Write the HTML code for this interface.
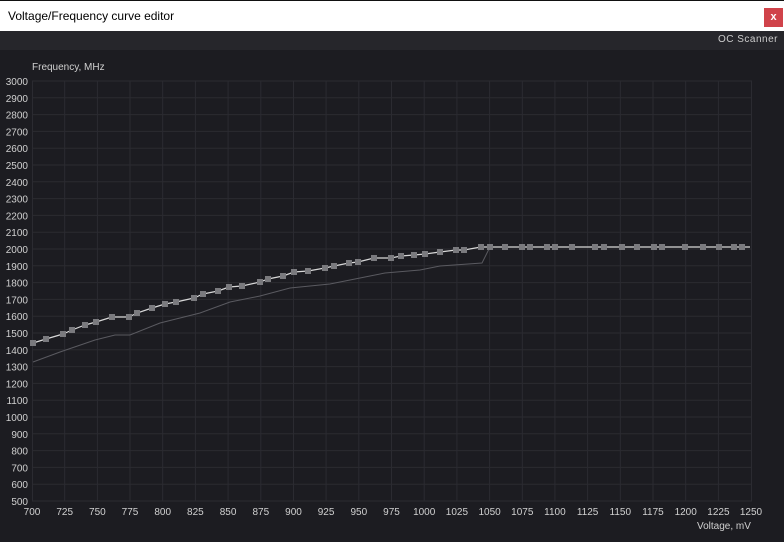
<!DOCTYPE html>
<html><head><meta charset="utf-8"><style>
html,body{margin:0;padding:0;width:784px;height:542px;overflow:hidden;background:#1c1c21;font-family:"Liberation Sans","DejaVu Sans",sans-serif}
.tb{position:absolute;left:0;top:0;width:784px;height:31px;background:#fff;border-top:1px solid #111;box-sizing:border-box}
.tb span{position:absolute;left:8px;top:8px;font-size:12px;color:#000}
.x{position:absolute;left:764px;top:7px;width:19px;height:19px;background:#d0434a;color:#fff;font-size:11px;text-align:center;line-height:18px;font-weight:bold}
.bar{position:absolute;left:0;top:31px;width:784px;height:19px;background:#26262b}
.bar span{position:absolute;right:6px;top:3px;font-size:10px;color:#ccc;letter-spacing:.5px}
svg{position:absolute;left:0;top:0}
</style></head><body>
<div class="tb"><span>Voltage/Frequency curve editor</span><div class="x">x</div></div>
<div class="bar"><span>OC Scanner</span></div>
<svg width="784" height="542" style="top:0">
<g stroke="#2b2b31" stroke-width="1" fill="none">
<path d="M32 81H752M32 97.8H752M32 114.6H752M32 131.4H752M32 148.2H752M32 165H752M32 181.8H752M32 198.6H752M32 215.4H752M32 232.2H752M32 249H752M32 265.8H752M32 282.6H752M32 299.4H752M32 316.2H752M32 333H752M32 349.8H752M32 366.6H752M32 383.4H752M32 400.2H752M32 417H752M32 433.8H752M32 450.6H752M32 467.4H752M32 484.2H752M32 501H752"/>
<path d="M32.5 81V501M64.7 81V501M97.4 81V501M130 81V501M162.7 81V501M195.4 81V501M228.1 81V501M260.8 81V501M293.5 81V501M326.1 81V501M358.8 81V501M391.5 81V501M424.2 81V501M456.9 81V501M489.6 81V501M522.3 81V501M554.9 81V501M587.6 81V501M620.3 81V501M653 81V501M685.7 81V501M718.4 81V501M751.5 81V501"/>
</g>
<polyline fill="none" stroke="#5a5a60" stroke-width="1" points="33,362 60,352 95,340 115,335 130,335 160,323 200,313 230,302 260,296 290,288 300,287 330,284 370,276 385,273 420,270 440,266 482,263 490,247"/>
<polyline fill="none" stroke="#d8d8d8" stroke-width="1.2" points="33,343 46,339 63,334 72,330 85,325 96,322 112,317 129,317 137,313 152,308 165,304 176,302 194,298 203,294 218,291 229,287 242,286 260,282 268,279 283,276 294,272 308,271 325,268 334,266 349,263 358,262 374,258 391,258 401,256 414,255 425,254 440,252 456,250 464,250 481,247 490,247 750,247"/>
<g fill="#7a7a7e">
<rect x="30" y="340" width="6" height="6"/><rect x="43" y="336" width="6" height="6"/><rect x="60" y="331" width="6" height="6"/><rect x="69" y="327" width="6" height="6"/><rect x="82" y="322" width="6" height="6"/><rect x="93" y="319" width="6" height="6"/><rect x="109" y="314" width="6" height="6"/><rect x="126" y="314" width="6" height="6"/><rect x="134" y="310" width="6" height="6"/><rect x="149" y="305" width="6" height="6"/><rect x="162" y="301" width="6" height="6"/><rect x="173" y="299" width="6" height="6"/><rect x="191" y="295" width="6" height="6"/><rect x="200" y="291" width="6" height="6"/><rect x="215" y="288" width="6" height="6"/><rect x="226" y="284" width="6" height="6"/><rect x="239" y="283" width="6" height="6"/><rect x="257" y="279" width="6" height="6"/><rect x="265" y="276" width="6" height="6"/><rect x="280" y="273" width="6" height="6"/><rect x="291" y="269" width="6" height="6"/><rect x="305" y="268" width="6" height="6"/><rect x="322" y="265" width="6" height="6"/><rect x="331" y="263" width="6" height="6"/><rect x="346" y="260" width="6" height="6"/><rect x="355" y="259" width="6" height="6"/><rect x="371" y="255" width="6" height="6"/><rect x="388" y="255" width="6" height="6"/><rect x="398" y="253" width="6" height="6"/><rect x="411" y="252" width="6" height="6"/><rect x="422" y="251" width="6" height="6"/><rect x="437" y="249" width="6" height="6"/><rect x="453" y="247" width="6" height="6"/><rect x="461" y="247" width="6" height="6"/><rect x="478" y="244" width="6" height="6"/><rect x="487" y="244" width="6" height="6"/><rect x="502" y="244" width="6" height="6"/><rect x="519" y="244" width="6" height="6"/><rect x="527" y="244" width="6" height="6"/><rect x="544" y="244" width="6" height="6"/><rect x="552" y="244" width="6" height="6"/><rect x="569" y="244" width="6" height="6"/><rect x="592" y="244" width="6" height="6"/><rect x="601" y="244" width="6" height="6"/><rect x="619" y="244" width="6" height="6"/><rect x="634" y="244" width="6" height="6"/><rect x="651" y="244" width="6" height="6"/><rect x="659" y="244" width="6" height="6"/><rect x="682" y="244" width="6" height="6"/><rect x="700" y="244" width="6" height="6"/><rect x="716" y="244" width="6" height="6"/><rect x="731" y="244" width="6" height="6"/><rect x="739" y="244" width="6" height="6"/>
</g>
<g fill="#d0d0d0" font-size="10" font-family="Liberation Sans, sans-serif">
<text x="32" y="70">Frequency, MHz</text>
<text x="697" y="529">Voltage, mV</text>
<g text-anchor="end">
<text x="28" y="85">3000</text><text x="28" y="101.8">2900</text><text x="28" y="118.6">2800</text><text x="28" y="135.4">2700</text><text x="28" y="152.2">2600</text><text x="28" y="169">2500</text><text x="28" y="185.8">2400</text><text x="28" y="202.6">2300</text><text x="28" y="219.4">2200</text><text x="28" y="236.2">2100</text><text x="28" y="253">2000</text><text x="28" y="269.8">1900</text><text x="28" y="286.6">1800</text><text x="28" y="303.4">1700</text><text x="28" y="320.2">1600</text><text x="28" y="337">1500</text><text x="28" y="353.8">1400</text><text x="28" y="370.6">1300</text><text x="28" y="387.4">1200</text><text x="28" y="404.2">1100</text><text x="28" y="421">1000</text><text x="28" y="437.8">900</text><text x="28" y="454.6">800</text><text x="28" y="471.4">700</text><text x="28" y="488.2">600</text><text x="28" y="505">500</text>
</g>
<g text-anchor="middle">
<text x="32" y="515">700</text><text x="64.7" y="515">725</text><text x="97.4" y="515">750</text><text x="130" y="515">775</text><text x="162.7" y="515">800</text><text x="195.4" y="515">825</text><text x="228.1" y="515">850</text><text x="260.8" y="515">875</text><text x="293.5" y="515">900</text><text x="326.1" y="515">925</text><text x="358.8" y="515">950</text><text x="391.5" y="515">975</text><text x="424.2" y="515">1000</text><text x="456.9" y="515">1025</text><text x="489.6" y="515">1050</text><text x="522.3" y="515">1075</text><text x="554.9" y="515">1100</text><text x="587.6" y="515">1125</text><text x="620.3" y="515">1150</text><text x="653" y="515">1175</text><text x="685.7" y="515">1200</text><text x="718.4" y="515">1225</text><text x="751" y="515">1250</text>
</g>
</g>
</svg>
</body></html>
